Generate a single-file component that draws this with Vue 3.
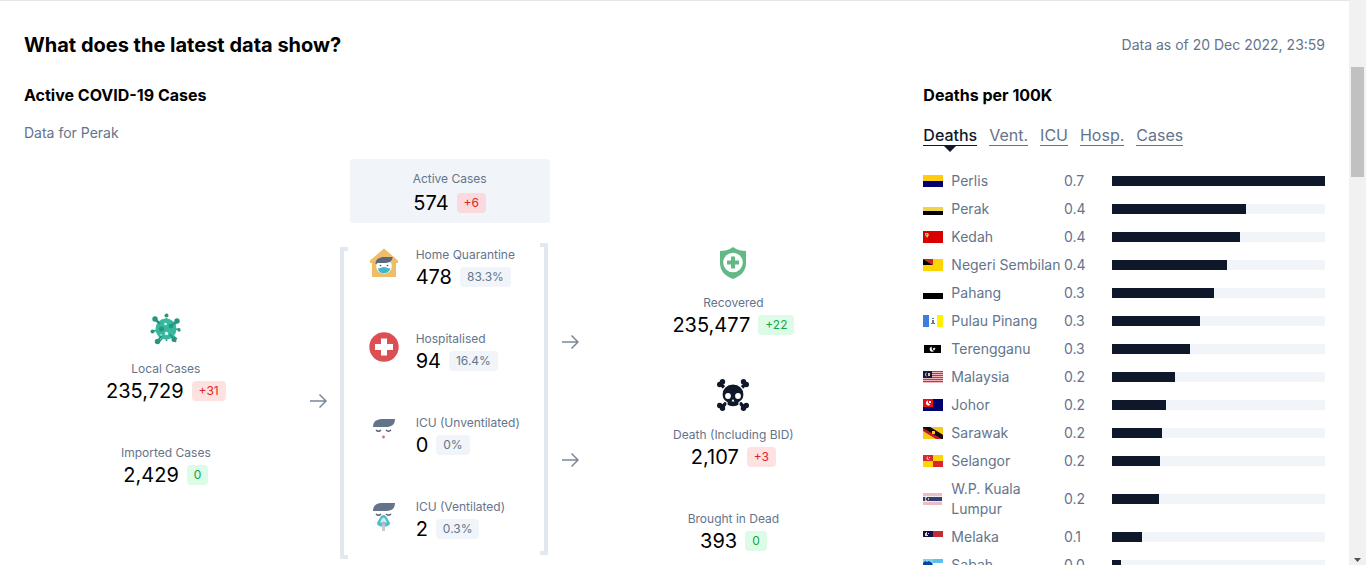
<script setup>
import { ref } from 'vue'

const tabs = ['Deaths', 'Vent.', 'ICU', 'Hosp.', 'Cases']
const active = ref('Deaths')

const localCases = [
  { icon: 'virus', label: 'Local Cases', value: '235,729', change: '+31', tone: 'red' },
  { icon: '', label: 'Imported Cases', value: '2,429', change: '0', tone: 'green' },
]

const care = [
  { icon: 'home', label: 'Home Quarantine', value: '478', share: '83.3%' },
  { icon: 'hospital', label: 'Hospitalised', value: '94', share: '16.4%' },
  { icon: 'icu', label: 'ICU (Unventilated)', value: '0', share: '0%' },
  { icon: 'vent', label: 'ICU (Ventilated)', value: '2', share: '0.3%' },
]

const outcomes = [
  { icon: 'shield', label: 'Recovered', value: '235,477', change: '+22', tone: 'green' },
  { icon: 'skull', label: 'Death (Including BID)', value: '2,107', change: '+3', tone: 'red' },
  { icon: '', label: 'Brought in Dead', value: '393', change: '0', tone: 'green' },
]

const states = [
  { name: 'Perlis', value: '0.7', bar: 100, flag: [['#ffcc10', 'M0 0h20v6H0z'], ['#00006f', 'M0 6h20v6H0z']] },
  { name: 'Perak', value: '0.4', bar: 63, flag: [['#fff', 'M0 0h20v4H0z'], ['#ecd548', 'M0 4h20v4H0z'], ['#000', 'M0 8h20v4H0z']] },
  { name: 'Kedah', value: '0.4', bar: 60, flag: [['#d80000', 'M0 0h20v12H0z'], ['#f5b52c', 'M2 2h3l1 2-2 3-2-3z'], ['#397a2b', 'M3 3h1v1H3z']] },
  { name: 'Negeri Sembilan', value: '0.4', bar: 54, flag: [['#ffd400', 'M0 0h20v12H0z'], ['#d12028', 'M0 0h10v6z'], ['#000', 'M0 0l10 6H0z']] },
  { name: 'Pahang', value: '0.3', bar: 48, flag: [['#fff', 'M0 0h20v6H0z'], ['#000', 'M0 6h20v6H0z']] },
  { name: 'Pulau Pinang', value: '0.3', bar: 41.5, flag: [['#3f7fd9', 'M0 0h6v12H0z'], ['#fff', 'M6 0h8v12H6z'], ['#fff200', 'M14 0h6v12h-6z'], ['#6d7891', 'M9 3h2v1H9zm0 2h2v3h1v1H8V8h1z']] },
  { name: 'Terengganu', value: '0.3', bar: 36.5, flag: [['#fff', 'M0 0h20v12H0z'], ['#000', 'M1 2h17v8H1z'], ['#fff', 'M9 3.5a2.6 2.6 0 1 0 2 4.5a3 3 0 0 1-2-4.5zM11 4l.5 1.2 1.3.1-1 .8.3 1.3-1.1-.7-1 .6.3-1.2-.9-.8 1.2-.1z']] },
  { name: 'Malaysia', value: '0.2', bar: 29.5, flag: [['#f0b9c0', 'M0 0h20v12H0z'], ['#cc3148', 'M0 0h20v1H0zM0 2h20v1H0zM0 4h20v1H0zM0 6h20v1H0zM0 8h20v1H0zM0 10h20v1H0z'], ['#10184e', 'M0 0h9v7H0z'], ['#ead44d', 'M4 1.5a2 2 0 1 0 0 4V5a1.6 1.6 0 0 1 0-3zM5 2h2v3H5z']] },
  { name: 'Johor', value: '0.2', bar: 25.5, flag: [['#00006f', 'M0 0h20v12H0z'], ['#e90d18', 'M0 0h10v8H0z'], ['#fff', 'M5 1.5a2.5 2.5 0 1 0 2.4 4A3 3 0 0 1 5 1.500zM6 2h2v2H6z']] },
  { name: 'Sarawak', value: '0.2', bar: 23.5, flag: [['#f5cb20', 'M0 0h20v12H0z'], ['#c51b25', 'M0 0h7l13 8v4h-7L0 4z'], ['#100b0b', 'M3 0h4l13 8v4h-1L0 1V0z'], ['#f5cb20', 'M9 4h3v3H9z']] },
  { name: 'Selangor', value: '0.2', bar: 22.5, flag: [['#ffd500', 'M0 0h20v12H0z'], ['#d72732', 'M0 0h10v6H0zm10 6h10v6H10z'], ['#f6dfa0', 'M5 1a2 2 0 1 0 2 3.300A2 2 0 0 1 5 1zM6 2h1v1H6z']] },
  { name: 'W.P. Kuala Lumpur', value: '0.2', bar: 22, flag: [['#e9bfc5', 'M0 0h19v12H0z'], ['#f3edf2', 'M0 3h19v6H0z'], ['#343d77', 'M0 4h19v4H0z'], ['#d7c37c', 'M2 4h2v1H3v2h1v1H2zM5 5h1v2H5z']] },
  { name: 'Melaka', value: '0.1', bar: 14, flag: [['#fff', 'M0 0h20v12H0z'], ['#c52b31', 'M9 0h11v6H9z'], ['#11124b', 'M0 0h10v6H0z'], ['#e5d9aa', 'M3 1h1v3h1v1H2V2h1zM5 2h1v1H5z']] },
  { name: 'Sabah', value: '0.0', bar: 4, flag: [['#5dc0f1', 'M0 0h20v5H0z'], ['#fff', 'M10 4h10v4H10z'], ['#df2535', 'M0 8h20v4H0z'], ['#7fd0ee', 'M0 0h10v8H0z'], ['#0745a5', 'M0 8V4l2-2 2 1 2-1 3 2 1 4z']] },
]
</script>

<template>
  <div class="shell">
    <svg class="defs" aria-hidden="true">
      <symbol id="virus" viewBox="0 0 32 32">
        <path d="M16.500 5v23M5 7l22 19M28 8L9 29M3 18l27-2M6 6l20 23" stroke="#2a9d88" stroke-width="1.500" />
        <circle cx="16" cy="16" r="10.500" fill="#38b99f" />
        <g fill="#259781">
          <circle cx="16.500" cy="2.500" r="2" /><circle cx="5" cy="6" r="2.700" /><circle cx="27" cy="8" r="2.700" />
          <circle cx="2.500" cy="18.500" r="2" /><circle cx="29" cy="17" r="1.700" /><circle cx="7.500" cy="28.500" r="2.700" />
          <circle cx="24" cy="26.500" r="2.500" /><circle cx="11.500" cy="16" r="2.500" /><circle cx="21" cy="13" r="2.300" />
          <path d="M5 6l5 5M27 8l-5 4M7.500 28.500l4-6M24 26.500l-4-5" stroke="#259781" stroke-width="2" />
        </g>
        <circle cx="15.500" cy="11" r="1.300" fill="#d9fff7" /><circle cx="16.500" cy="20.500" r="1.700" fill="#d9fff7" />
        <circle cx="11" cy="22" r=".8" fill="#d9fff7" />
      </symbol>
      <symbol id="home" viewBox="0 0 32 32">
        <path d="M16 1.500L2 13.500V16h2v14h24V16h2v-2.500z" fill="#edbd68" />
        <circle cx="16" cy="19" r="7.800" fill="#fff" />
        <path d="M7.500 17c0-5 4-7 9-7h8c0 5-4 6-9 6h-6c-1 0-1 2-2 1z" fill="#596780" />
        <circle cx="12.500" cy="18.500" r=".8" fill="#445" /><circle cx="19.500" cy="18.500" r=".8" fill="#445" />
        <path d="M10 21c2 1 3-1 6-1s4 2 6 1c1 6-12 8-12 0z" fill="#43b5cf" />
      </symbol>
      <symbol id="hospital" viewBox="0 0 32 32">
        <circle cx="16" cy="16" r="14.700" fill="#dc5054" />
        <path d="M13 7.500h6V13h6v6h-6v5.500h-6V19H7v-6h6z" fill="#fff" />
      </symbol>
      <symbol id="face" viewBox="0 0 32 32">
        <path d="M5 12c0-6 4-8 10-8h12c0 6-4 8-9 8z" fill="#64748b" />
        <path d="M8 15q2.500 2.500 5 0M18 15q2.500 2.500 5 0" fill="none" stroke="#536174" stroke-width="1.500" />
      </symbol>
      <symbol id="icu" viewBox="0 0 32 32">
        <use href="#face" /><circle cx="15.500" cy="22" r="1.400" fill="#d66d70" />
      </symbol>
      <symbol id="vent" viewBox="0 0 32 32">
        <use href="#face" />
        <path d="M15.500 16c-3 0-4 4-6.500 8 0 5 13 5 13 0-2.500-4-3.500-8-6.500-8z" fill="#4abdd0" />
        <path d="M15.500 18.500c-2 .5-2.500 3-3.500 5h7c-1-2-1.500-4.500-3.500-5z" fill="#c9edf2" />
        <circle cx="15.500" cy="25" r="2.300" fill="#aeb9bf" /><path d="M14 26h3v6h-3z" fill="#c5cccc" />
      </symbol>
      <symbol id="shield" viewBox="0 0 32 32">
        <path d="M16 0C12 3 7 4 3 4v12c0 8 5 13 13 16 8-3 13-8 13-16V4c-4 0-9-1-13-4z" fill="#62b985" />
        <circle cx="16" cy="15.500" r="9.800" fill="#fff" />
        <path d="M14 9.500h4v4h4v4h-4v4h-4v-4h-4v-4h4z" fill="#62b985" />
      </symbol>
      <symbol id="skull" viewBox="0 0 32 32">
        <g fill="#0f172a">
          <path d="M2 3.500L28 29M30 3.500L4 29" stroke="#0f172a" stroke-width="3.500" />
          <circle cx="2.700" cy="5.500" r="2.700" /><circle cx="5.500" cy="2.700" r="2.700" /><circle cx="29.300" cy="5.500" r="2.700" /><circle cx="26.500" cy="2.700" r="2.700" />
          <circle cx="2.700" cy="26.500" r="2.700" /><circle cx="5.500" cy="29.300" r="2.700" /><circle cx="29.300" cy="26.500" r="2.700" /><circle cx="26.500" cy="29.300" r="2.700" />
        </g>
        <path d="M16 5c-6.500 0-11 4.500-11 10.500 0 4 2 6.500 5 8v2.500c2.500 2.500 9.500 2.500 12 0v-2.500c3-1.500 5-4 5-8 0-6-4.500-10.500-11-10.500z" fill="#0f172a" stroke="#fff" stroke-width="1.200" />
        <circle cx="11" cy="17" r="2.900" fill="#fff" /><circle cx="21" cy="17" r="2.900" fill="#fff" />
        <path d="M16 20l-1.500 2.500h3z" fill="#fff" />
      </symbol>
      <symbol id="arrow" viewBox="0 0 18 16">
        <path d="M1 8h15.500M10.500 1.500L17 8l-6.500 6.500" fill="none" stroke="#7b8798" stroke-width="1.500" />
      </symbol>
    </svg>

    <main class="page">
      <header class="top">
        <h2>What does the latest data show?</h2>
        <p>Data as of 20 Dec 2022, 23:59</p>
      </header>

      <div class="columns">
        <section class="cases">
          <h3>Active COVID-19 Cases</h3>
          <p class="note">Data for Perak</p>

          <div class="summary">
            <span class="label">Active Cases</span>
            <div class="figure"><span class="number">574</span><span class="badge red">+6</span></div>
          </div>

          <div class="flow">
            <div class="stack">
              <div v-for="s in localCases" :key="s.label" class="stat">
                <svg v-if="s.icon" class="icon"><use :href="'#' + s.icon" /></svg>
                <span class="label">{{ s.label }}</span>
                <div class="figure"><span class="number">{{ s.value }}</span><span class="badge" :class="s.tone">{{ s.change }}</span></div>
              </div>
            </div>

            <div class="middle">
              <svg class="arrow"><use href="#arrow" /></svg>
              <div class="bracket left"></div>
              <div class="care">
                <div v-for="c in care" :key="c.label" class="care-item">
                  <svg class="icon"><use :href="'#' + c.icon" /></svg>
                  <div>
                    <span class="label">{{ c.label }}</span>
                    <div class="figure"><span class="number">{{ c.value }}</span><span class="badge">{{ c.share }}</span></div>
                  </div>
                </div>
              </div>
              <div class="bracket right"></div>
              <div class="arrows">
                <svg class="arrow"><use href="#arrow" /></svg>
                <svg class="arrow"><use href="#arrow" /></svg>
              </div>
            </div>

            <div class="stack">
              <div v-for="s in outcomes" :key="s.label" class="stat">
                <svg v-if="s.icon" class="icon"><use :href="'#' + s.icon" /></svg>
                <span class="label">{{ s.label }}</span>
                <div class="figure"><span class="number">{{ s.value }}</span><span class="badge" :class="s.tone">{{ s.change }}</span></div>
              </div>
            </div>
          </div>
        </section>

        <section class="ranking">
          <h3>Deaths per 100K</h3>
          <nav class="tabs">
            <button v-for="t in tabs" :key="t" type="button" :class="{ on: t === active }" @click="active = t">{{ t }}</button>
          </nav>
          <table>
            <colgroup><col class="c-name" /><col class="c-value" /><col /></colgroup>
            <tbody>
              <tr v-for="s in states" :key="s.name">
                <th scope="row">
                  <div class="state">
                    <svg class="flag" viewBox="0 0 20 12"><path v-for="(p, i) in s.flag" :key="i" :fill="p[0]" :d="p[1]" /></svg>
                    <span>{{ s.name }}</span>
                  </div>
                </th>
                <td>{{ s.value }}</td>
                <td><div class="track"><div class="bar" :style="{ width: s.bar + '%' }"></div></div></td>
              </tr>
            </tbody>
          </table>
        </section>
      </div>
    </main>

    <div class="scrollbar" aria-hidden="true">
      <div class="thumb"></div>
      <svg viewBox="0 0 17 10"><path d="M5 3h7l-3.500 4z" fill="#505050" /></svg>
    </div>
  </div>
</template>

<style>
body {
  margin: 0;
  overflow: hidden;
}
</style>

<style scoped>
.shell {
  display: flex;
  height: 100vh;
  overflow: hidden;
  background: #fff;
  color: #64748b;
  font-family: Inter, "Liberation Sans", sans-serif;
  font-size: 14px;
  line-height: 20px;
}
.defs {
  position: absolute;
  width: 0;
  height: 0;
}
.page {
  flex: 1;
  min-width: 0;
  box-sizing: border-box;
  padding: 30px 24px 0;
  border-top: 1px solid #e5e5e5;
}
h2, h3, p {
  margin: 0;
}
h2, h3 {
  color: #000;
  font-weight: 700;
}
h2 {
  font-size: 20px;
  line-height: 28px;
}
h3 {
  font-size: 16px;
  line-height: 24px;
}
.top {
  display: flex;
  justify-content: space-between;
  align-items: center;
}
.columns {
  display: grid;
  grid-template-columns: repeat(3, minmax(0, 1fr));
  gap: 48px;
  margin-top: 24px;
}
.cases {
  grid-column: span 2;
}
.note {
  margin-top: 16px;
}
.label {
  display: block;
  font-size: 12px;
  line-height: 16px;
}
.summary {
  display: flex;
  flex-direction: column;
  align-items: center;
  gap: 2px;
  width: 200px;
  box-sizing: border-box;
  margin: 16px auto 20px;
  padding: 12px 0 6px;
  border-radius: 3px;
  background: #f1f5f9;
}
.figure {
  display: flex;
  align-items: center;
  gap: 8px;
  height: 28px;
}
.number {
  color: #000;
  font-size: 20px;
  line-height: 28px;
}
.badge {
  padding: 0 7px;
  border-radius: 4px;
  background: #f1f5f9;
  font-size: 12px;
  line-height: 20px;
}
.badge.red {
  background: #fee2e2;
  color: #dc2626;
}
.summary .badge.red {
  background: #fbd9dd;
}
.badge.green {
  background: #dcfce7;
  color: #16a34a;
}
.flow {
  display: grid;
  grid-template-columns: repeat(3, minmax(0, 1fr));
  align-items: center;
}
.stack {
  display: flex;
  flex-direction: column;
  gap: 40px;
}
.stat {
  display: flex;
  flex-direction: column;
  align-items: center;
}
.icon {
  flex: none;
  width: 32px;
  height: 32px;
}
.stat .icon {
  margin-bottom: 16px;
}
.middle {
  display: flex;
  align-items: center;
  justify-content: center;
  padding-right: 12px;
}
.arrow {
  width: 18px;
  height: 16px;
}
.arrows {
  display: flex;
  flex-direction: column;
  gap: 102px;
}
.bracket {
  align-self: stretch;
  box-sizing: border-box;
  width: 8px;
  border: 4px solid #e2e8f0;
}
.left {
  margin: 4px 20px 0 13px;
  border-right: 0;
}
.right {
  margin: 0 13px 4px 20px;
  border-left: 0;
}
.care {
  display: flex;
  flex-direction: column;
  gap: 40px;
  width: 152px;
  padding: 4px 0 16px;
}
.care-item {
  display: flex;
  gap: 16px;
  white-space: nowrap;
}
.tabs {
  display: flex;
  gap: 12px;
  margin: 15px 0 21px;
}
.tabs button {
  position: relative;
  padding: 4px 0 0;
  border: 0;
  border-bottom: 1px solid #64748b;
  background: none;
  color: #64748b;
  font: inherit;
  font-size: 16px;
  line-height: 19px;
  cursor: pointer;
}
.tabs .on {
  border-color: #0f172a;
  color: #0f172a;
  font-weight: 500;
}
.tabs .on::after {
  content: "";
  position: absolute;
  top: 100%;
  left: 50%;
  margin-left: -7px;
  border: 7px solid transparent;
  border-top-color: #0f172a;
  border-bottom: 0;
}
table {
  width: 100%;
  table-layout: fixed;
  border-collapse: collapse;
}
.c-name {
  width: 35%;
}
.c-value {
  width: 12%;
}
th, td {
  padding: 4px 0;
  font-weight: 400;
  text-align: left;
}
.state {
  display: flex;
  align-items: center;
  gap: 8px;
}
.flag {
  flex: none;
  width: 20px;
  height: 12px;
}
.track {
  background: #f1f5f9;
}
.bar {
  height: 10px;
  background: #0f172a;
}
.scrollbar {
  display: flex;
  flex-direction: column;
  justify-content: space-between;
  flex: none;
  width: 17px;
  background: #f1f1f1;
}
.thumb {
  height: 110px;
  margin: 67px 2px 0;
  background: #c1c1c1;
}
.scrollbar svg {
  width: 17px;
  height: 10px;
}
</style>
